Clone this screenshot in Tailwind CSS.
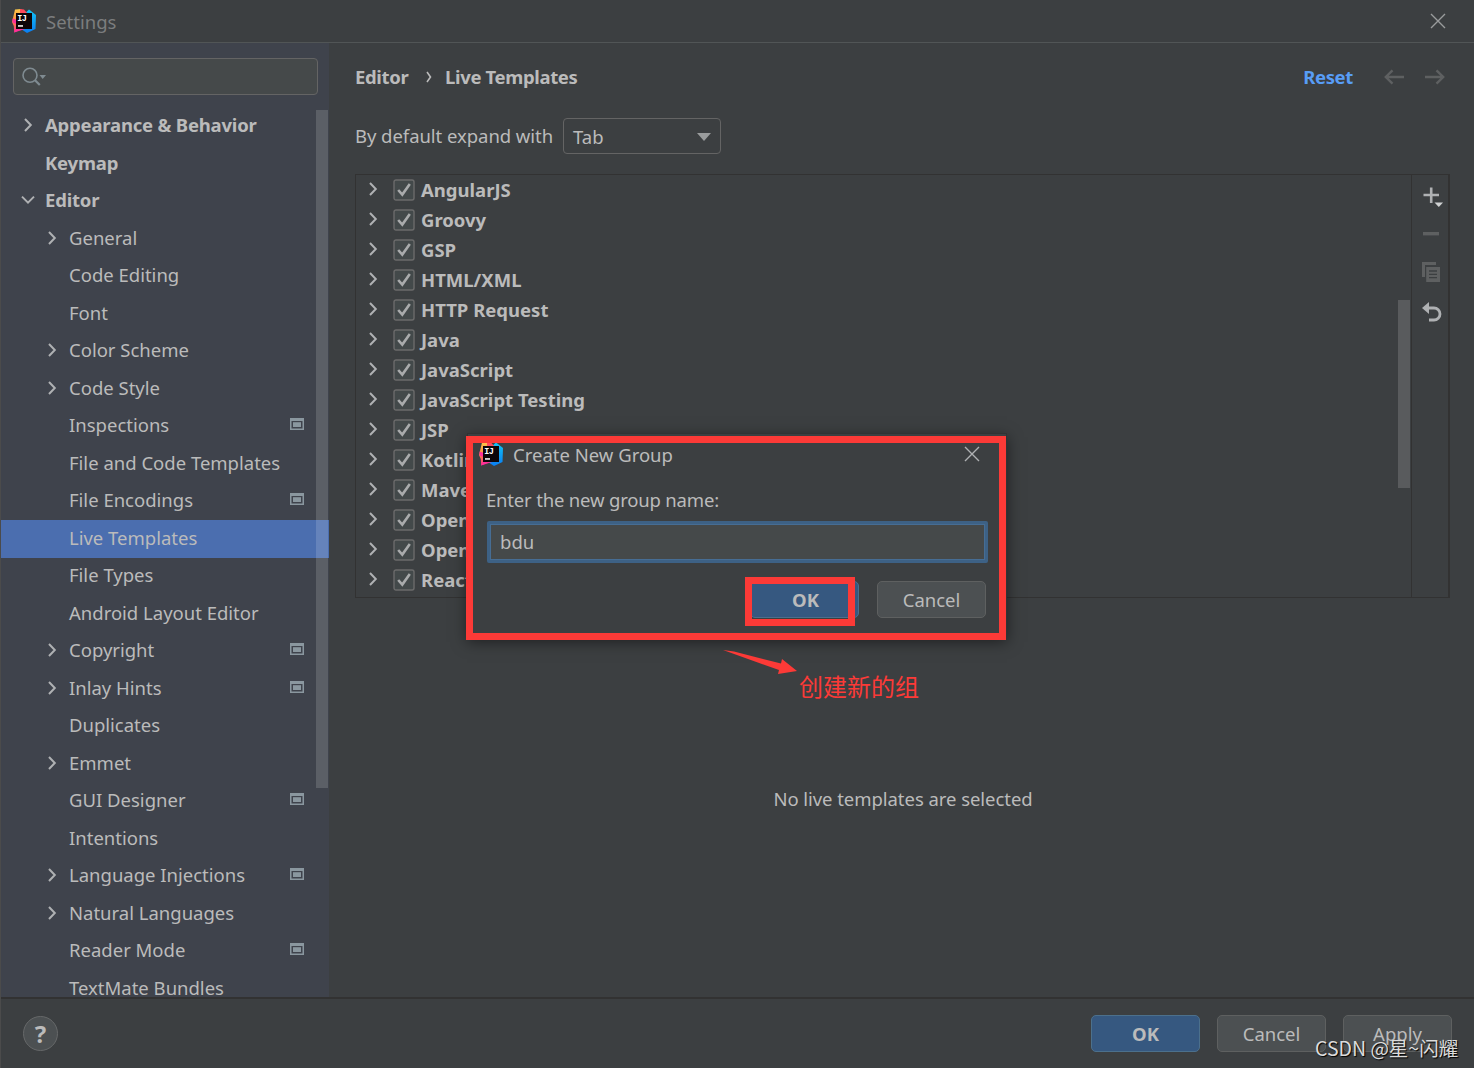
<!DOCTYPE html>
<html lang="en">
<head>
    <meta charset="UTF-8">
    <meta name="viewport" content="width=device-width, initial-scale=1.0">
    <title>Settings</title>
    <script src="https://cdn.jsdelivr.net/npm/@tailwindcss/browser@4"></script>
</head>
<body class="w-[1474px] h-[1068px] overflow-hidden bg-[#3c3f41] text-[#bbbbbb] text-[18.5px] leading-none font-['Noto_Sans','Noto_Sans_CJK_SC',sans-serif]">

    <!-- Shared icons -->
    <svg class="absolute w-0 h-0">
        <defs>
            <linearGradient id="warm" x1="0" y1="0" x2="0" y2="1">
                <stop offset="0" stop-color="#fcc84a"/>
                <stop offset="0.5" stop-color="#fc8a3d"/>
                <stop offset="1" stop-color="#ff2f8e"/>
            </linearGradient>
            <linearGradient id="cool" x1="0" y1="0" x2="0" y2="1">
                <stop offset="0" stop-color="#12c4f5"/>
                <stop offset="1" stop-color="#0a7df2"/>
            </linearGradient>
            <symbol id="logo" viewBox="0 0 24 24">
                <path fill="url(#cool)" d="M12 5 L17 0.5 L24 6 L23.5 20 L15 24 L9 20 Z"/>
                <path fill="url(#warm)" d="M3 0.5 L9 0 L12 6 L10 20 L2.2 23.5 L1.8 17 L0 13 L1 9 Z"/>
                <path fill="#ff4a5c" d="M8 0 L12 0.5 L16 5 L8 6 Z"/>
                <path fill="#ff2f9a" d="M0.5 9.5 L5 11 L4 15 L0.5 13.5 Z M2.2 23.5 L13 20 L5 17 Z"/>
                <rect x="4" y="4" width="16" height="16" fill="#0c0508"/>
                <text x="5.2" y="12" fill="#fff" class="text-[8.5px] font-bold tracking-[-0.6px] font-['Liberation_Mono',monospace]">IJ</text>
                <rect x="6" y="16.2" width="5" height="1.5" fill="#fff"/>
            </symbol>
            <symbol id="right" viewBox="0 0 14 14">
                <path fill="none" stroke="#afb1b3" stroke-width="2" d="M4 1 L9.8 7 L4 13"/>
            </symbol>
            <symbol id="down" viewBox="0 0 14 14">
                <path fill="none" stroke="#afb1b3" stroke-width="2" d="M1 3.6 L7 9.6 L13 3.6"/>
            </symbol>
            <symbol id="project" viewBox="0 0 14 12">
                <path fill="#8a979f" fill-rule="evenodd" d="M0 0 H14 V12 H0 Z M1.5 3 V10.6 H12.5 V3 Z"/>
                <rect x="3" y="4.2" width="8" height="4.8" fill="#8a979f"/>
            </symbol>
            <symbol id="check" viewBox="0 0 22 22">
                <rect x="1" y="1" width="20" height="20" rx="2" fill="#43494a" stroke="#6b6b6b" stroke-width="1.4"/>
                <path fill="none" stroke="#a9abac" stroke-width="2.6" d="M5.2 11 L9.3 15.6 L16.8 5"/>
            </symbol>
            <symbol id="close" viewBox="0 0 16 16">
                <path fill="none" stroke="currentColor" stroke-width="1.4" d="M1 1 L15 15 M15 1 L1 15"/>
            </symbol>
        </defs>
    </svg>

    <div class="flex flex-col w-full h-full border-l border-[#4b4b4b]">
        <!-- Title bar -->
        <header class="flex items-center h-[43px] shrink-0 border-b border-[#515556] pl-[11px] pr-[28px]">
            <svg class="w-6 h-6"><use href="#logo"/></svg>
            <span class="ml-[10px] mt-[2px] text-[#7b7d7e] whitespace-nowrap">Settings</span>
            <svg class="w-4 h-4 ml-auto text-[#9a9c9d]"><use href="#close"/></svg>
        </header>

        <main class="flex h-[954px] shrink-0">
            <!-- Sidebar -->
            <aside class="relative flex flex-col w-[328px] h-full shrink-0 bg-[#3f434c] overflow-hidden">
                <div class="flex items-center shrink-0 w-[305px] h-[37px] mt-[15px] ml-3 pl-2 rounded-[4px] border-[1.5px] border-[#646464] bg-[#45494a]">
                    <svg class="w-6 h-5" viewBox="0 0 24 20">
                        <circle cx="8" cy="8.3" r="7" fill="none" stroke="#7f8b91" stroke-width="1.6"/>
                        <path d="M12.8 13 L17.8 18" stroke="#7f8b91" stroke-width="2.2"/>
                        <path d="M17.5 8 H24 L20.7 12 Z" fill="#7f8b91"/>
                    </svg>
                </div>
                <ul id="tree" class="mt-[12.5px]"></ul>
                <div class="absolute left-[315px] top-[67px] w-[12px] h-[678px] bg-white/15"></div>
            </aside>

            <!-- Content -->
            <section class="flex flex-col flex-1 pl-[26px] pr-[24px]">
                <div class="flex items-center h-5 mt-[24px] font-bold tracking-[-0.35px]">
                    <span class="w-[54px] whitespace-nowrap">Editor</span>
                    <svg class="w-2 h-3 ml-[16px] mr-[12px]" viewBox="0 0 8 12"><path d="M2 1 L5.5 6 L2 11" fill="none" stroke="#bbbbbb" stroke-width="1.6"/></svg>
                    <span class="whitespace-nowrap">Live Templates</span>
                    <a class="ml-auto text-[#589df6]">Reset</a>
                    <svg class="w-5 h-4 ml-[31px]" viewBox="0 0 20 16"><path d="M20 8 H2 M8.5 1.3 L1.8 8 L8.5 14.7" fill="none" stroke="#5e6061" stroke-width="2.4"/></svg>
                    <svg class="w-5 h-4 ml-[21px] mr-[5px]" viewBox="0 0 20 16"><path d="M0 8 H18 M11.5 1.3 L18.2 8 L11.5 14.7" fill="none" stroke="#5e6061" stroke-width="2.4"/></svg>
                </div>
                <div class="flex items-center h-9 mt-[31px]">
                    <span class="w-[208px] whitespace-nowrap tracking-[-0.05px]">By default expand with</span>
                    <div class="flex items-center justify-between w-[158px] h-[36px] pl-[9px] pr-[9px] rounded-[4px] border-[1.5px] border-[#646464]">
                        <span class="mt-[2px]">Tab</span>
                        <svg class="w-[14px] h-2 mt-[2px]" viewBox="0 0 14 8"><path d="M0 0 H14 L7 8 Z" fill="#9a9c9d"/></svg>
                    </div>
                </div>
                <div class="flex w-[1095px] h-[424px] mt-[20px] border border-r-2 border-[#323232]">
                    <ul id="groups" class="flex-1"></ul>
                    <div class="w-[13px] pt-[125px]">
                        <div class="w-[12px] h-[188px] bg-[#595b5d]"></div>
                    </div>
                    <div class="flex flex-col items-center w-[37px] border-l border-[#323232] pt-[12px] pl-[2px]">
                        <svg class="w-5 h-5 ml-[4px]" viewBox="0 0 20 20">
                            <path d="M0.5 8 H16 M8.2 0.5 V16" stroke="#afb1b3" stroke-width="2.6"/>
                            <path d="M11.5 15.5 H20 L15.8 20 Z" fill="#d0d2d3"/>
                        </svg>
                        <svg class="w-4 h-[4px] mt-[25px]" viewBox="0 0 16 4"><rect width="16" height="3.4" fill="#5e6061"/></svg>
                        <svg class="w-[18px] h-5 mt-[26px]" viewBox="0 0 18 20">
                            <path d="M0 0 H14 V3 H3 V15 H0 Z" fill="#5e6061"/>
                            <rect x="4.2" y="5" width="13.8" height="15" fill="#5e6061"/>
                            <path d="M7 9 H15 M7 12.3 H15 M7 15.6 H15" stroke="#3c3f41" stroke-width="1.3"/>
                        </svg>
                        <svg class="w-5 h-5 mt-[20px] ml-[2px]" viewBox="0 0 20 20">
                            <path d="M4 6 H12 A6 6 0 0 1 12 18 H7" fill="none" stroke="#afb1b3" stroke-width="2.8"/>
                            <path d="M0 6 L7 0 V12 Z" fill="#afb1b3"/>
                        </svg>
                    </div>
                </div>
                <p class="mt-[192px] pl-[1px] text-center tracking-[-0.05px]">No live templates are selected</p>
            </section>
        </main>

        <!-- Bottom bar -->
        <footer class="flex items-center flex-1 border-t-2 border-[#323232] pl-[22px] pr-[22px]">
            <div class="flex items-center justify-center w-[35px] h-[35px] rounded-full border-[1.5px] border-[#666869] bg-[#4c5052] text-[24px] font-bold">?</div>
            <div class="flex gap-[17px] ml-auto">
                <button class="w-[109px] h-[37px] pt-[1px] rounded-[5px] border-[1.5px] border-[#4c708c] bg-[#365880] font-bold">OK</button>
                <button class="w-[109px] h-[37px] pt-[1px] rounded-[5px] border-[1.5px] border-[#5e6060] bg-[#4c5052]">Cancel</button>
                <button class="w-[109px] h-[37px] pt-[1px] rounded-[5px] border-[1.5px] border-[#5e6060] bg-[#4c5052]">Apply</button>
            </div>
        </footer>
    </div>

    <!-- Create New Group dialog -->
    <div class="absolute left-[467px] top-[433px] w-[540px] h-[205px] bg-[#3c3f41] border border-[#313334] shadow-[0_4px_14px_rgba(0,0,0,0.5)]">
        <div class="flex items-center h-[40px] pl-[11px] pr-[26px]">
            <svg class="w-6 h-6"><use href="#logo"/></svg>
            <span class="ml-[10px] mt-[2px] whitespace-nowrap">Create New Group</span>
            <svg class="w-4 h-4 ml-auto text-[#afb1b3]"><use href="#close"/></svg>
        </div>
        <div class="pl-[19px] pr-[19px]">
            <p class="mt-[16px] -ml-px h-5 flex items-center tracking-[-0.18px]">Enter the new group name:</p>
            <div class="w-[501px] h-[42px] mt-[11px] border-[3px] border-[#3d6185] rounded-[2px]">
                <div class="flex items-center h-full pl-[9px] border border-[#466d94] bg-[#45494a]">bdu</div>
            </div>
            <div class="flex justify-end gap-[18px] mt-[18px] pr-[1px]">
                <button class="w-[109px] h-[37px] pt-[1px] pl-[2px] rounded-[5px] border-[1.5px] border-[#4c708c] bg-[#365880] font-bold">OK</button>
                <button class="w-[109px] h-[37px] pt-[1px] rounded-[5px] border-[1.5px] border-[#5e6060] bg-[#4c5052]">Cancel</button>
            </div>
        </div>
    </div>

    <!-- Annotations -->
    <div class="absolute left-[466px] top-[436px] w-[540px] h-[204px] border-[7px] border-[#fc3a37]"></div>
    <div class="absolute left-[745px] top-[577px] w-[110px] h-[49px] border-[7px] border-[#fc3a37]"></div>
    <svg class="absolute left-[720px] top-[645px] w-20 h-8" viewBox="0 0 80 32">
        <path d="M3 5 L14 6.5 L61 18.5 L62 14 L77 26 L58 29 L59 25 Z" fill="#fc3a37"/>
    </svg>
    <div class="absolute left-[799px] top-[674px] text-[24px] text-[#fc3a37] whitespace-nowrap font-['Noto_Sans_CJK_SC',sans-serif]">创建新的组</div>
    <div class="absolute left-[1315px] top-[1038px] text-[19.5px] text-[#dcdcdc] whitespace-nowrap [text-shadow:1px_1px_1px_#000] font-['Noto_Sans_CJK_SC',sans-serif]">CSDN @星~闪耀</div>

    <script>
        // [label, level, arrow, project icon]
        const tree = [
            ['Appearance & Behavior', 0, 'right'],
            ['Keymap', 0],
            ['Editor', 0, 'down'],
            ['General', 1, 'right'],
            ['Code Editing', 1],
            ['Font', 1],
            ['Color Scheme', 1, 'right'],
            ['Code Style', 1, 'right'],
            ['Inspections', 1, '', true],
            ['File and Code Templates', 1],
            ['File Encodings', 1, '', true],
            ['Live Templates', 1],
            ['File Types', 1],
            ['Android Layout Editor', 1],
            ['Copyright', 1, 'right', true],
            ['Inlay Hints', 1, 'right', true],
            ['Duplicates', 1],
            ['Emmet', 1, 'right'],
            ['GUI Designer', 1, '', true],
            ['Intentions', 1],
            ['Language Injections', 1, 'right', true],
            ['Natural Languages', 1, 'right'],
            ['Reader Mode', 1, '', true],
            ['TextMate Bundles', 1]
        ];
        const groups = ['AngularJS', 'Groovy', 'GSP', 'HTML/XML', 'HTTP Request', 'Java', 'JavaScript',
            'JavaScript Testing', 'JSP', 'Kotlin', 'Maven', 'OpenAPI', 'OpenAPI', 'React'];

        document.getElementById('tree').innerHTML = tree.map(([label, level, arrow, project]) => `
            <li class="flex items-center h-[37.5px] pr-[25px] pb-[2px] ${level ? 'pl-[44px]' : 'pl-[20px] font-bold tracking-[-0.2px]'} ${label === 'Live Templates' ? 'bg-[#4b6eaf]' : ''}">
                <svg class="w-[14px] h-[14px] shrink-0">${arrow ? `<use href="#${arrow}"/>` : ''}</svg>
                <span class="ml-[10px] whitespace-nowrap">${label.replace('&', '&amp;')}</span>
                ${project ? '<svg class="w-[14px] h-3 ml-auto shrink-0 mb-[2px]"><use href="#project"/></svg>' : ''}
            </li>`).join('');

        document.getElementById('groups').innerHTML = groups.map(label => `
            <li class="flex items-center h-[30px] pl-[10px] font-bold">
                <svg class="w-[14px] h-[14px] mb-[2px]"><use href="#right"/></svg>
                <svg class="w-[22px] h-[22px] ml-[13px]"><use href="#check"/></svg>
                <span class="ml-[6px] whitespace-nowrap">${label}</span>
            </li>`).join('');
    </script>
</body>
</html>
